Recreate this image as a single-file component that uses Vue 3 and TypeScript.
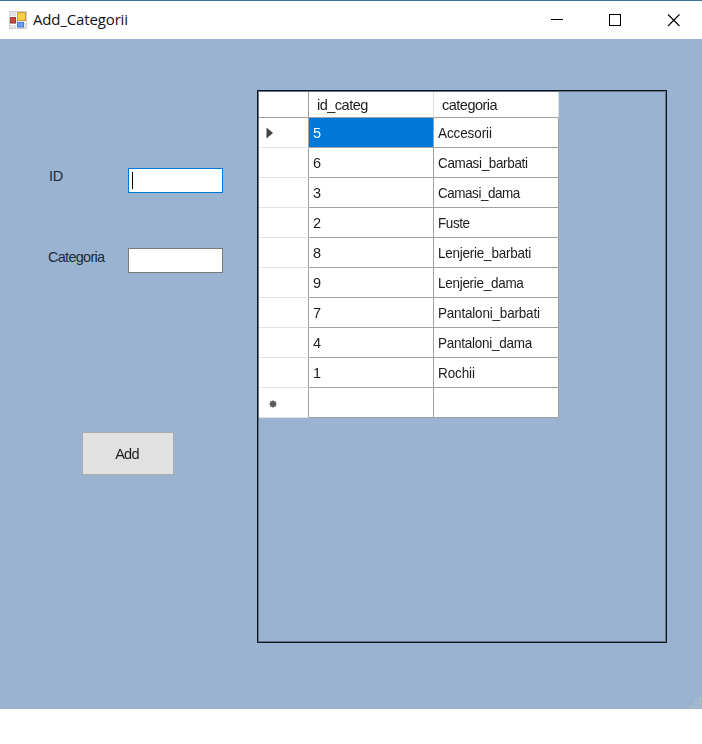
<script setup lang="ts">
import { ref, onMounted } from 'vue'

interface Category {
  id: string
  name: string
  spacing: number
}

const rows: Category[] = [
  { id: '5', name: 'Accesorii', spacing: -0.1 },
  { id: '6', name: 'Camasi_barbati', spacing: -0.37 },
  { id: '3', name: 'Camasi_dama', spacing: -0.5 },
  { id: '2', name: 'Fuste', spacing: -0.45 },
  { id: '8', name: 'Lenjerie_barbati', spacing: -0.25 },
  { id: '9', name: 'Lenjerie_dama', spacing: -0.3 },
  { id: '7', name: 'Pantaloni_barbati', spacing: -0.2 },
  { id: '4', name: 'Pantaloni_dama', spacing: -0.27 },
  { id: '1', name: 'Rochii', spacing: -0.1 },
]
const selected = ref(0)
const id = ref('')
const category = ref('')
const idBox = ref<HTMLInputElement | null>(null)
onMounted(() => idBox.value?.focus())
</script>

<template>
  <div class="window">
    <header class="titlebar">
      <svg class="app-icon" width="18" height="18" viewBox="0 0 18 18">
        <rect x="0.5" y="0.5" width="17" height="17" fill="#e0e2e5" stroke="#cfd1d5" />
        <path d="M7.5 1v16M1 5.5h6M1 13.5h6M8 11h9" stroke="#fff" />
        <rect x="1.5" y="6.5" width="5" height="5.500" fill="#c8483e" stroke="#a23a34" />
        <rect x="8.5" y="1.5" width="8" height="8" fill="#f8cf4a" stroke="#c99a2c" />
        <rect x="8.5" y="11.5" width="6" height="4.500" fill="#6a9ff0" stroke="#4677d2" />
      </svg>
      <span class="title">Add_Categorii</span>
      <div class="controls">
        <svg width="59" height="38" viewBox="0 0 59 38"><path d="M21 18.5h12" stroke="#000" /></svg>
        <svg width="58" height="38" viewBox="0 0 58 38"><rect x="20.5" y="13.5" width="11" height="11" fill="none" stroke="#000" /></svg>
        <svg width="55" height="38" viewBox="0 0 55 38"><path d="M21 13.5l11.5 11.5M32.5 13.5l-11.5 11.5" stroke="#000" stroke-width="1.1" /></svg>
      </div>
    </header>
    <main class="client">
      <form class="form" @submit.prevent>
        <div class="field">
          <label class="short" for="id">ID</label>
          <div class="box active">
            <span class="caret"></span>
            <input id="id" ref="idBox" v-model="id" />
          </div>
        </div>
        <div class="field second">
          <label for="category">Categoria</label>
          <div class="box"><input id="category" v-model="category" /></div>
        </div>
        <button type="button">Add</button>
      </form>
      <section class="panel">
        <div class="grid">
          <div class="corner"></div>
          <div class="head">id_categ</div>
          <div class="head">categoria</div>
          <template v-for="(row, i) in rows" :key="row.id">
            <div class="marker">
              <svg v-if="i === selected" width="8" height="12" viewBox="0 0 8 12"><path d="M0.5 0.5L7 6L0.5 11.5z" fill="#444" /></svg>
            </div>
            <div class="cell" :class="{ selected: i === selected }" @click="selected = i">{{ row.id }}</div>
            <div class="cell"><span class="name" :style="{ letterSpacing: row.spacing + 'px' }">{{ row.name }}</span></div>
          </template>
          <div class="marker new">
            <svg width="8" height="8" viewBox="0 0 8 8"><circle cx="4" cy="4" r="3" fill="#4c4c4c" /><path d="M4 0v8M0 4h8M1 1l6 6M7 1l-6 6" stroke="#666" stroke-width="0.8" /></svg>
          </div>
          <div class="cell"></div>
          <div class="cell"></div>
        </div>
      </section>
      <svg class="grip" width="12" height="12" viewBox="0 0 12 12">
        <path d="M9 1h2v2h-2zM5 5h2v2h-2zM9 5h2v2h-2zM1 9h2v2h-2zM5 9h2v2h-2zM9 9h2v2h-2z" fill="#bcc3ca" stroke="#abbac9" />
      </svg>
    </main>
  </div>
</template>

<style>
body {
  margin: 0;
  background: #fff;
}
</style>

<style scoped>
.window {
  width: 702px;
  height: 744px;
  background: #fff;
  color: #1c1c20;
  font: 14.5px/18px "Liberation Sans", Arial, sans-serif;
  overflow: hidden;
}
.titlebar {
  box-sizing: border-box;
  height: 39px;
  border-top: 1px solid #3c75a9;
  padding-left: 9px;
  display: flex;
  align-items: center;
}
.app-icon {
  margin-right: 6px;
}
.title {
  font: 15px/20px "Open Sans", "Noto Sans", sans-serif;
  letter-spacing: -0.15px;
  color: #111;
  padding-bottom: 2px;
}
.controls {
  margin-left: auto;
  display: flex;
}
.client {
  position: relative;
  box-sizing: border-box;
  height: 670px;
  background: #9ab3d0;
  display: flex;
}
.form {
  width: 257px;
  padding: 129px 0 0 48px;
  box-sizing: border-box;
}
.field {
  display: flex;
  height: 25px;
}
.field.second {
  margin-top: 55px;
}
label {
  box-sizing: border-box;
  width: 80px;
  letter-spacing: -0.72px;
  color: #202b3b;
}
.short {
  padding-left: 1px;
  margin-top: -1px;
  letter-spacing: -0.4px;
}
.box {
  box-sizing: border-box;
  width: 95px;
  height: 25px;
  border: 1px solid #7a7a7a;
  background: #fff;
  display: flex;
  align-items: center;
  padding-left: 3px;
}
.box.active {
  border-color: #0078d7;
}
.caret {
  width: 1px;
  height: 17px;
  background: #000;
}
input {
  width: 85px;
  padding: 0;
  border: 0;
  outline: 0;
  background: transparent;
  font: inherit;
  caret-color: transparent;
}
button {
  display: block;
  width: 92px;
  height: 43px;
  margin: 159px 0 0 34px;
  padding: 0 2px 0 0;
  border: 1px solid #adadad;
  background: #e1e1e1;
  color: #1c1c20;
  font: inherit;
  letter-spacing: -0.7px;
}
.panel {
  box-sizing: border-box;
  width: 410px;
  height: 553px;
  margin-top: 51px;
  border: 1px solid #10161d;
  padding: 1px 0 0 1px;
  box-shadow: inset 0 0 0 1px rgba(16, 22, 29, 0.4);
}
.grid {
  display: grid;
  grid-template-columns: 50px 125px 125px;
  grid-template-rows: 26px repeat(10, 30px);
}
.grid > div {
  box-sizing: border-box;
  background: #fff;
  border-right: 1px solid #a0a0a0;
  border-bottom: 1px solid #a0a0a0;
  display: flex;
  align-items: center;
}
.grid > .head {
  padding: 1px 0 0 8px;
  letter-spacing: -0.5px;
  border-right-color: #e0e0e0;
}
.grid > .marker {
  padding-left: 7px;
  border-bottom-color: #e3e3e3;
}
.grid > .new {
  padding: 3px 0 0 10px;
}
.grid > .cell {
  padding-left: 4px;
}
.grid > .selected {
  background: #0078d7;
  color: #fff;
}
.name {
  transform: scaleX(0.93);
  transform-origin: left center;
}
.grip {
  position: absolute;
  right: 0;
  bottom: 0;
}
</style>
